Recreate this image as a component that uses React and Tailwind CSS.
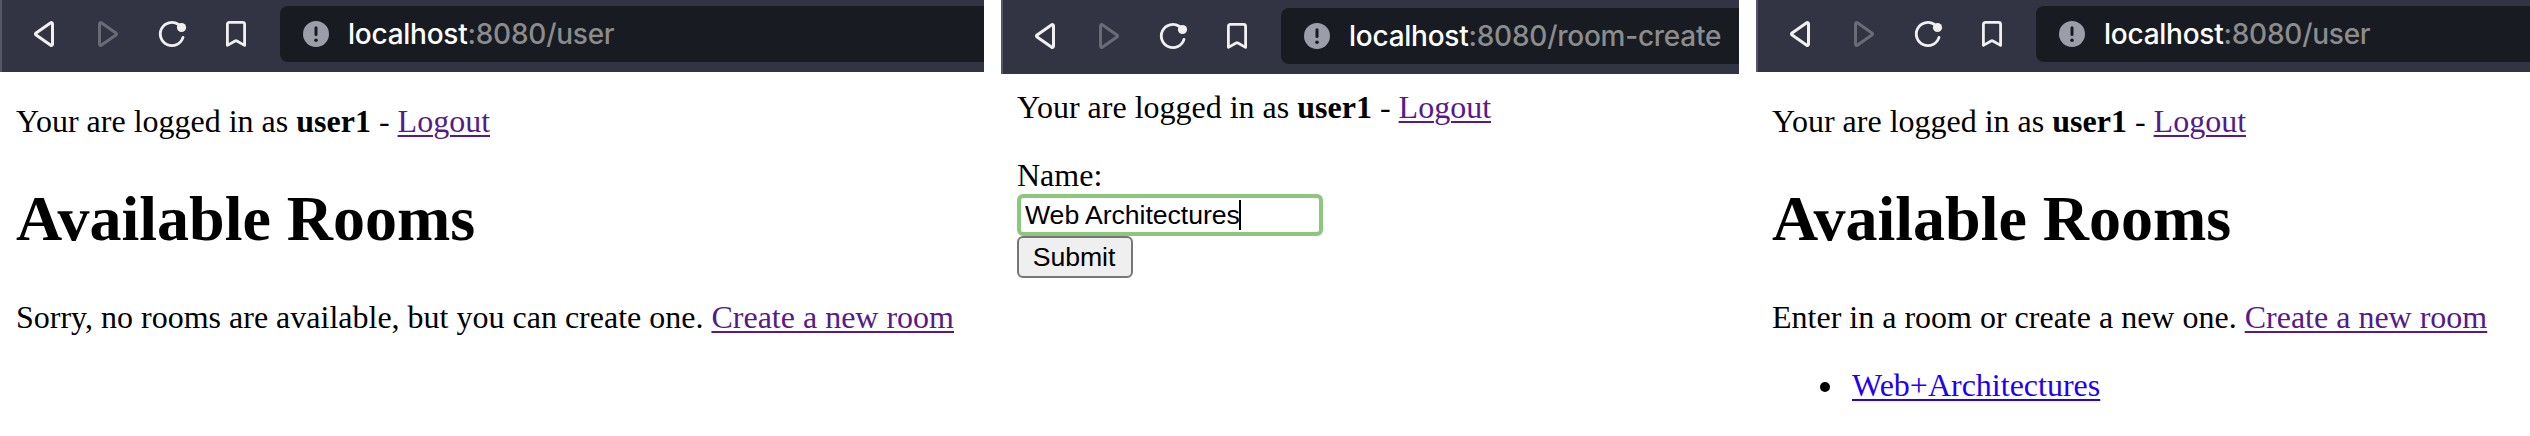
function BackIcon() {
  return (
    <svg className="w-8 h-8 shrink-0" viewBox="0 0 32 32" fill="none" stroke="#f0f0f1" strokeWidth="3" strokeLinejoin="round">
      <path d="M8.1 17.1Q7 16 8.1 14.9L22.4 4.9Q24.5 3.8 24.5 6.2V25.8Q24.5 28.2 22.4 27.1Z" />
    </svg>
  );
}

function ForwardIcon() {
  return (
    <svg className="w-8 h-8 shrink-0" viewBox="0 0 32 32" fill="none" stroke="#696b76" strokeWidth="3" strokeLinejoin="round">
      <path d="M23.9 17.1Q25 16 23.9 14.9L9.6 4.9Q7.5 3.8 7.5 6.2V25.8Q7.5 28.2 9.6 27.1Z" />
    </svg>
  );
}

function ReloadIcon() {
  return (
    <svg className="w-8 h-8 shrink-0" viewBox="0 0 32 32" fill="none" stroke="#f0f0f1" strokeWidth="2.8" strokeLinecap="round">
      <path d="M22.2 6.3A11.6 11.6 0 1 0 27 19.4" />
      <circle cx="25.5" cy="9.5" r="4.6" fill="#f0f0f1" stroke="none" />
    </svg>
  );
}

function BookmarkIcon() {
  return (
    <svg className="w-8 h-8 shrink-0" viewBox="0 0 32 32" fill="none" stroke="#f0f0f1" strokeWidth="2.8" strokeLinejoin="round">
      <path d="M7.4 27.4V6.4Q7.4 4.4 9.4 4.4H22.6Q24.6 4.4 24.6 6.4V27.4L16.9 23Q16 22.5 15.1 23Z" />
    </svg>
  );
}

function InfoIcon() {
  return (
    <svg className="w-[26px] h-[26px] shrink-0" viewBox="0 0 26 26">
      <circle cx="13" cy="13" r="13" fill="#9b9ea8" />
      <path d="M13 6.7V13.5" stroke="#181b22" strokeWidth="3" strokeLinecap="round" />
      <circle cx="13" cy="19.2" r="1.8" fill="#181b22" />
    </svg>
  );
}

function Toolbar({ path, className }) {
  return (
    <header className={`flex items-start bg-[#323443] border-l-2 border-[#565866] overflow-hidden ${className}`}>
      <div className="flex items-center h-14 pl-[26px] shrink-0">
        <BackIcon />
        <span className="w-8" />
        <ForwardIcon />
        <span className="w-8" />
        <ReloadIcon />
        <span className="w-8" />
        <BookmarkIcon />
      </div>
      <div className="flex items-center flex-1 h-14 ml-7 pl-[23px] bg-[#181b22] rounded-l-lg">
        <InfoIcon />
        <p className="ml-[19px] text-[28px] leading-8 tracking-[-0.25px] font-medium whitespace-nowrap font-['Inter',sans-serif] text-[#8b8c8d]">
          <span className="text-white">localhost</span>:8080{path}
        </p>
      </div>
    </header>
  );
}

function Link({ children, className = "text-[#551a8b]" }) {
  return (
    <a href="#" className={`underline decoration-2 underline-offset-[3px] ${className}`}>
      {children}
    </a>
  );
}

function LoginStatus() {
  return (
    <p>
      Your are logged in as <b>user1</b> - <Link>Logout</Link>
    </p>
  );
}

function RoomsPage({ message, children }) {
  return (
    <div className="pl-4 pt-[31px]">
      <LoginStatus />
      <h1 className="mt-[43px] text-[64px] leading-[74px] font-bold">Available Rooms</h1>
      <p className="mt-[43px]">
        {message} <Link>Create a new room</Link>
      </p>
      {children}
    </div>
  );
}

export default function App() {
  return (
    <main className="flex gap-[17px] w-[2530px] h-[436px] bg-white text-black overflow-hidden whitespace-nowrap text-[32px] leading-9 font-['Liberation_Serif',serif]">
      <section className="w-[984px] shrink-0">
        <Toolbar path="/user" className="h-[72px] pt-1.5" />
        <RoomsPage message="Sorry, no rooms are available, but you can create one." />
      </section>

      <section className="w-[738px] shrink-0">
        <Toolbar path="/room-create" className="h-[74px] pt-2" />
        <div className="pl-4 pt-[15px]">
          <LoginStatus />
          <form className="mt-8 flex flex-col items-start font-['Liberation_Sans',sans-serif] text-[26.67px]">
            <label className="font-['Liberation_Serif',serif] text-[32px]">Name:</label>
            <div className="mt-[1px] flex items-center w-[306px] h-[42px] pl-1 border-4 border-[#8bc77d] rounded-md">
              <span className="tracking-[-0.06px]">Web Architectures</span>
              <span className="w-0.5 h-[30px] -ml-px bg-black" />
            </div>
            <button type="button" className="w-[116px] h-[42px] pr-0.5 leading-[38px] tracking-[-0.06px] border-2 border-[#767676] rounded-md bg-[#efefef]">
              Submit
            </button>
          </form>
        </div>
      </section>

      <section className="w-[774px] shrink-0">
        <Toolbar path="/user" className="h-[72px] pt-1.5" />
        <RoomsPage message="Enter in a room or create a new one.">
          <ul className="mt-8 pl-12">
            <li className="flex items-center">
              <span className="w-2.5 h-2.5 mt-1 mr-[22px] rounded-full bg-black" />
              <Link className="text-[#2400f2]">Web+Architectures</Link>
            </li>
          </ul>
        </RoomsPage>
      </section>
    </main>
  );
}
